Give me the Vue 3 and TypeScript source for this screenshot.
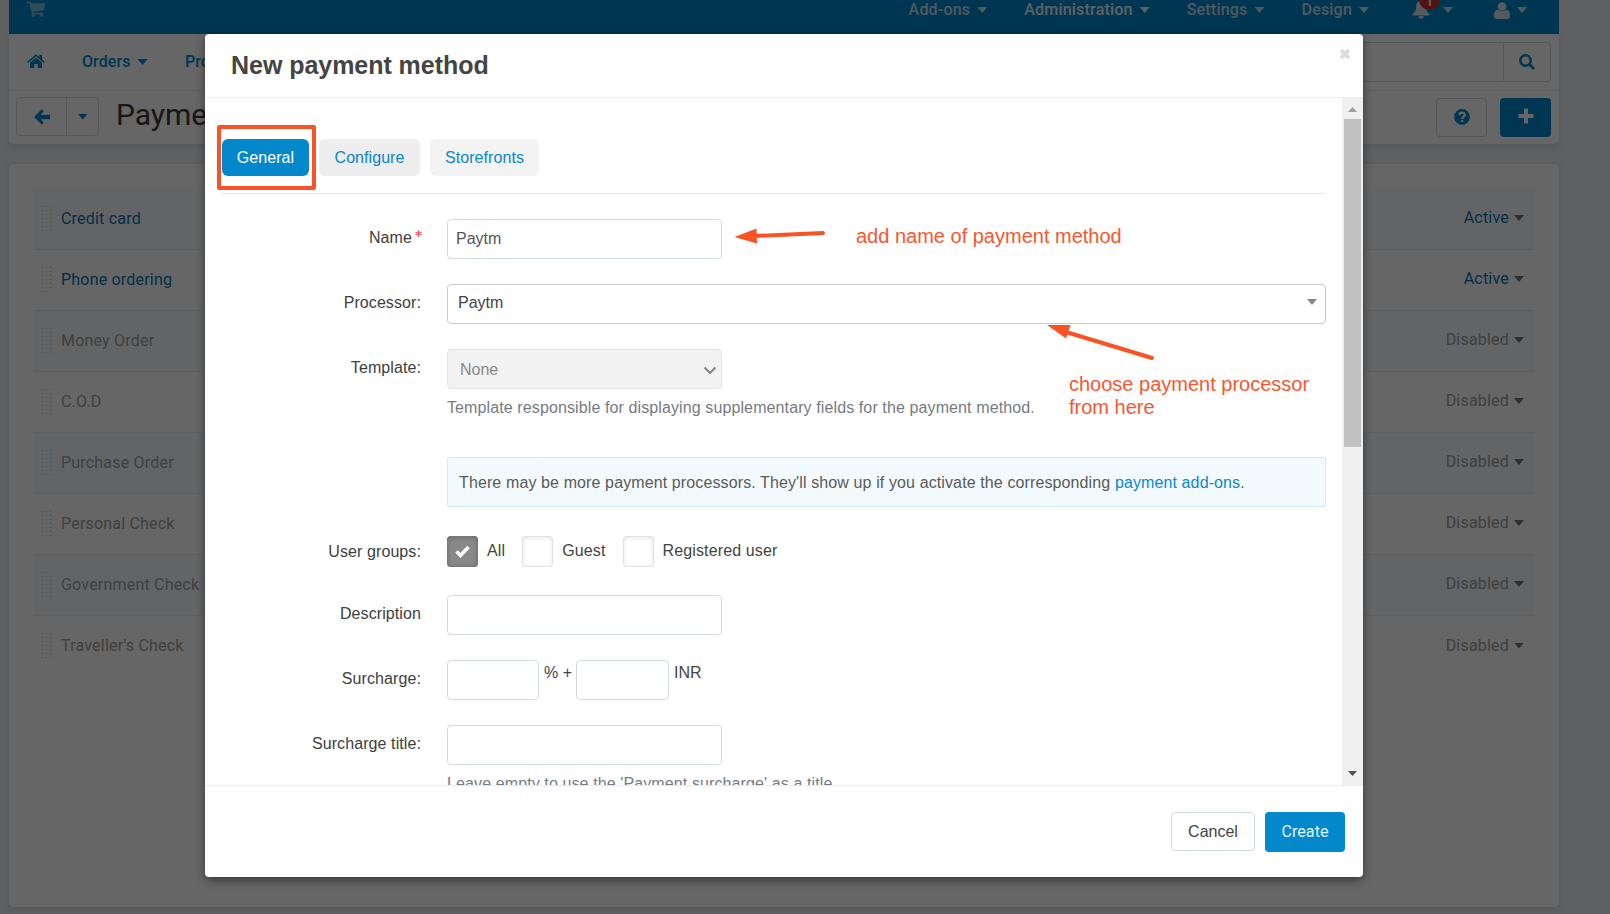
<script setup lang="ts">
import { ref } from 'vue'

interface MenuItem { label: string; active?: boolean; gap: number }
interface Method { name: string; enabled: boolean }
interface Group { label: string; checked: boolean }

const menu: MenuItem[] = [
  { label: 'Add-ons', gap: 37 },
  { label: 'Administration', active: true, gap: 37 },
  { label: 'Settings', gap: 37 },
  { label: 'Design', gap: 43 },
]

const methods: Method[] = [
  { name: 'Credit card', enabled: true },
  { name: 'Phone ordering', enabled: true },
  { name: 'Money Order', enabled: false },
  { name: 'C.O.D', enabled: false },
  { name: 'Purchase Order', enabled: false },
  { name: 'Personal Check', enabled: false },
  { name: 'Government Check', enabled: false },
  { name: "Traveller's Check", enabled: false },
]

const tabs = ['General', 'Configure', 'Storefronts']
const activeTab = ref('General')
const paymentName = ref('Paytm')
const groups = ref<Group[]>([
  { label: 'All', checked: true },
  { label: 'Guest', checked: false },
  { label: 'Registered user', checked: false },
])
</script>

<template>
  <div class="screen">
    <div class="page">
      <header class="topbar">
        <svg class="cart" width="18" height="16" viewBox="0 0 18 16">
          <path d="M0 .8h3.600l.5 1.500H18l-1 7.200-11 1.200.4 1H16v1.700H5L2.600 2.600H0z" />
          <circle cx="6.200" cy="14.200" r="1.600" /><circle cx="14.600" cy="14.200" r="1.600" />
        </svg>
        <nav class="menu">
          <a v-for="m in menu" :key="m.label" :class="{ on: m.active }" :style="{ marginRight: m.gap + 'px' }">
            {{ m.label }}<i class="caret"></i>
          </a>
          <span class="bell">
            <svg width="18" height="19" viewBox="0 0 18 19">
              <path d="M9 0c3.200 0 4.600 2.400 4.800 5.400.2 3.400 1 5.600 3.700 7.600v1.600H.5V13C3.200 11 4 8.800 4.200 5.400 4.400 2.400 5.800 0 9 0zM6.400 15h5.200a2.600 2.600 0 0 1-5.200 0z" />
            </svg>
            <b class="count">1</b>
          </span>
          <i class="caret bell-caret"></i>
          <svg class="user" width="16" height="17" viewBox="0 0 16 17">
            <circle cx="8" cy="4.500" r="4.300" />
            <path d="M4 7.500C1 8 0 10.500 0 14c0 2 1 3 3 3h10c2 0 3-1 3-3 0-3.500-1-6-4-6.500-2 2.300-6 2.300-8 0z" />
          </svg>
          <i class="caret"></i>
        </nav>
      </header>

      <section class="headcard">
        <div class="subnav">
          <svg class="home" width="18" height="14" viewBox="0 0 18 14">
            <path d="M9 .2 12.400 3V.800H15V5.200l2.700 2.300-1 1.200L9 2.300 1.300 8.700l-1-1.200z" />
            <path d="M9 3.600 15 8.600V14h-4.300v-4H7.300v4H3V8.600z" />
          </svg>
          <a class="orders">Orders<i class="caret"></i></a>
          <a class="products">Pro</a>
          <div class="search">
            <span></span>
            <svg width="16" height="16" viewBox="0 0 16 16">
              <circle cx="6.500" cy="6.500" r="5.200" /><path d="M10.500 10.500 15 15" />
            </svg>
          </div>
        </div>
        <div class="titlebar">
          <div class="back">
            <span><svg width="16" height="16" viewBox="0 0 16 16"><path d="M7.800.3 9.800 2.300 6.700 5.800H16v4.400H6.700l3.100 3.500-2 2L0 8z" /></svg></span>
            <span class="drop"><i class="caret"></i></span>
          </div>
          <h1>Payment methods</h1>
          <span class="help">
            <svg width="16" height="16" viewBox="0 0 16 16">
              <circle cx="8" cy="8" r="7.900" />
              <path class="cut" d="M5.500 6.200c0-3.400 5.200-3.200 5.200-.3 0 1.900-2.500 1.900-2.500 4" />
              <path class="cut" d="M8.200 11v2" />
            </svg>
          </span>
          <span class="plus"><svg width="16" height="16" viewBox="0 0 16 16"><path d="M6 .5h4V6h5.500v4H10v5.500H6V10H.5V6H6z" /></svg></span>
        </div>
      </section>

      <section class="listcard">
        <div v-for="m in methods" :key="m.name" class="row" :class="{ off: !m.enabled }">
          <i class="grip"></i>
          <span class="mname">{{ m.name }}</span>
          <span class="status">{{ m.enabled ? 'Active' : 'Disabled' }}<i class="caret"></i></span>
        </div>
      </section>
    </div>

    <div class="backdrop"></div>

    <div class="modal">
      <header class="mhead">
        <h2>New payment method</h2>
        <svg class="close" width="12" height="12" viewBox="0 0 12 12"><path d="M2 2 10 10M10 2 2 10" /></svg>
      </header>
      <div class="mbody">
        <div class="content">
          <div class="tabs">
            <button v-for="t in tabs" :key="t" :class="['tab', t.toLowerCase(), { on: t === activeTab }]" @click="activeTab = t">{{ t }}</button>
          </div>

          <div class="field">
            <label class="req">Name<svg width="7" height="7" viewBox="0 0 7 7"><path d="M3.500.3v6.400M.5 2l6 3M6.500 2l-6 3" /></svg></label>
            <input v-model="paymentName" class="box wide" spellcheck="false" />
          </div>
          <div class="field">
            <label>Processor:</label>
            <div class="box processor">Paytm<i></i></div>
          </div>
          <div class="field last">
            <label>Template:</label>
            <div class="box wide template">None
              <svg width="14" height="9" viewBox="0 0 14 9"><path d="M1.500 1.500 7 7l5.500-5.500" /></svg>
            </div>
          </div>
          <p class="hint">Template responsible for displaying supplementary fields for the payment method.</p>
          <p class="info">There may be more payment processors. They'll show up if you activate the corresponding <a>payment add-ons</a>.</p>

          <div class="field groups">
            <label>User groups:</label>
            <span v-for="g in groups" :key="g.label" class="group">
              <i class="check" :class="{ on: g.checked }">
                <svg v-if="g.checked" width="15" height="13" viewBox="0 0 15 13"><path d="M1.500 6.500 5.500 10.500 13.500 2" /></svg>
              </i>{{ g.label }}
            </span>
          </div>
          <div class="field"><label>Description</label><input class="box wide" /></div>
          <div class="field">
            <label>Surcharge:</label>
            <input class="box percent" /><span class="unit plusunit">% +</span>
            <input class="box amount" /><span class="unit">INR</span>
          </div>
          <div class="field last"><label>Surcharge title:</label><input class="box wide" /></div>
          <p class="hint">Leave empty to use the 'Payment surcharge' as a title.</p>
        </div>
        <div class="scroll">
          <i class="up"></i><i class="thumb"></i><i class="down"></i>
        </div>
      </div>
      <footer class="mfoot">
        <button class="cancel">Cancel</button>
        <button class="create">Create</button>
      </footer>
    </div>

    <i class="frame"></i>
    <svg class="arrows" width="1610" height="914" viewBox="0 0 1610 914">
      <path class="shaft" d="M755 236 823 233" />
      <path d="M734.500 237 756.500 228.500 757 243.500z" />
      <path class="shaft" d="M1066 332 1152 358" />
      <path d="M1047 325 1070.500 325 1066 338.500z" />
    </svg>
    <div class="note n1">add name of payment method</div>
    <div class="note n2">choose payment processor<br />from here</div>
  </div>
</template>

<style>
body { margin: 0; overflow: hidden; }
</style>

<style scoped>
* { box-sizing: border-box; }
.screen {
  position: relative; width: 1610px; height: 914px; overflow: hidden;
  background: #ebeff4; color: #333;
  font: 16px/20px "Liberation Sans", Arial, sans-serif;
}
.page { width: 1550px; margin-left: 9px; font-family: Roboto, sans-serif; }
.caret {
  display: inline-block; flex: none; width: 10px; height: 6px; background: currentColor;
  clip-path: polygon(0 0, 100% 0, 50% 100%);
}
.topbar { display: flex; height: 34px; background: #0388cc; color: #c3dfed; }
.cart { margin: 1px 0 0 18px; fill: #78bce0; }
.menu { display: flex; margin-left: auto; padding-right: 32px; height: 20px; align-items: center; font-weight: 500; }
.menu a { display: flex; align-items: center; gap: 7px; letter-spacing: .2px; }
.menu a.on { color: #e4f5fc; }
.bell { position: relative; display: flex; width: 18px; margin-right: 13px; }
.bell svg { fill: #d0e4ee; }
.count {
  position: absolute; left: 7px; top: -13px; width: 21px; height: 22px; border-radius: 11px;
  background: #c8302b; color: #fff; font: 500 14px/27px Roboto, sans-serif; text-align: center;
}
.bell-caret { margin-right: 41px; }
.user { fill: #d0e4ee; margin-right: 7px; }
.headcard, .listcard { background: #fff; box-shadow: 0 2px 6px rgba(40, 60, 80, .14); }
.headcard { height: 110px; border-radius: 0 0 5px 5px; margin-bottom: 20px; }
.subnav { display: flex; height: 57px; border-bottom: 1px solid #eceeef; align-items: center; color: #0388cc; font-weight: 500; }
.subnav a { display: flex; align-items: center; gap: 7px; height: 20px; letter-spacing: .1px; }
.home { margin: -3px 37px 0 18px; fill: #0388cc; }
.orders { width: 103px; }
.search { margin: 0 8px 0 auto; width: 400px; height: 40px; display: flex; align-items: center; border: 1px solid #d3dbe3; border-radius: 4px; }
.search span { flex: 1; align-self: stretch; border-right: 1px solid #d3dbe3; margin-right: 15px; }
.search svg { fill: none; stroke: #0388cc; stroke-width: 2.600; margin-right: 15px; }
.titlebar { display: flex; padding: 6px 8px 0 7px; }
.back { display: flex; width: 83px; height: 39px; border: 1px solid #d3dbe3; border-radius: 4px; }
.back span { display: flex; align-items: center; justify-content: center; width: 50px; color: #0388cc; }
.back svg { fill: #0388cc; }
.back .drop { width: 32px; border-left: 1px solid #d3dbe3; }
h1 { margin: 0 auto 0 17px; font: 400 30px/36px Roboto, sans-serif; color: #3a3a3a; }
.help, .plus { display: flex; align-items: center; justify-content: center; width: 51px; height: 39px; border-radius: 4px; margin-top: 1px; }
.help { border: 1px solid #d3dbe3; margin-right: 13px; fill: #0388cc; }
.help svg { margin-top: -2px; }
.cut { fill: none; stroke: #fff; stroke-width: 2.200; }
.plus { background: #0388cc; fill: #fff; }
.plus svg { margin-top: -3px; }
.listcard { height: 743px; padding: 25px; border-radius: 5px; }
.row { display: flex; align-items: center; height: 61px; border-bottom: 1px solid #eaeef1; padding: 0 10px 0 8px; color: #0673b5; }
.row:nth-child(odd) { background: #f8fbff; }
.row:last-child { border: 0; background: none; }
.grip {
  width: 10px; height: 25px; margin-right: 9px; margin-top: -2px;
  background: linear-gradient(#fff, #fff) 0 0 / 0 0 no-repeat, radial-gradient(circle at .5px .5px, #c4c8cb .7px, transparent .8px) 0 0 / 4px 4px;
}
.mname { margin-top: -1px; letter-spacing: .2px; }
.status { margin-left: auto; display: flex; align-items: center; gap: 5px; margin-top: -2px; letter-spacing: .2px; }
.status .caret { background: #777; }
.off { color: #a0a0a0; }

.backdrop { position: absolute; inset: 0; background: rgba(0, 0, 0, .6); }

.modal {
  position: absolute; left: 205px; top: 34px; width: 1158px; height: 843px;
  background: #fff; border-radius: 4px; box-shadow: 0 3px 10px rgba(0, 0, 0, .45);
}
.mhead { display: flex; justify-content: space-between; height: 64px; border-bottom: 1px solid #eee; padding: 0 12px 0 26px; }
h2 { margin: 15px 0 0; font: 700 25px/32px "Liberation Sans", Arial, sans-serif; color: #444; letter-spacing: -.04px; }
.close { margin-top: 14px; fill: none; stroke: #ddd; stroke-width: 4; }
.mbody { display: flex; height: 687px; overflow: hidden; }
.content { width: 1137px; padding: 0 16px 0 17px; }
.tabs { display: flex; align-items: flex-start; gap: 10px; height: 96px; padding-top: 41px; margin-bottom: 25px; border-bottom: 1px solid #e1e5ea; }
.tab { height: 37px; padding: 0; border: 0; border-radius: 6px; font: 16px/37px "Liberation Sans", Arial, sans-serif; background: #ededed; color: #0e86ca; letter-spacing: .06px; }
.general { width: 87px; }
.configure { width: 101px; }
.storefronts { width: 109px; background: #f3f3f3; }
.tab.on { background: #0388cc; color: #fff; }
.field { display: flex; height: 40px; margin-bottom: 25px; }
.field.last { margin-bottom: 0; }
label { width: 199px; margin-right: 26px; text-align: right; line-height: 38px; color: #404040; letter-spacing: .09px; }
.req svg { margin-left: 3px; vertical-align: 6px; stroke: #f55165; stroke-width: 1.300; margin-right: -1px; }
.box { height: 40px; border: 1px solid #d3dae2; border-radius: 4px; background: #fff; padding: 0 8px; font: 16px/37px "Liberation Sans", Arial, sans-serif; color: #555; outline: 0; }
.wide { width: 275px; }
.processor { display: flex; justify-content: space-between; width: 879px; padding: 0 8px 0 10px; border-color: #c8c8c8; line-height: 35px; color: #444; }
.processor i { width: 10px; height: 6px; margin-top: 14px; background: #888; clip-path: polygon(0 0, 100% 0, 50% 100%); }
.template { display: flex; justify-content: space-between; padding: 0 4px 0 12px; background: #f2f2f2; border-color: #e0e4e9; color: #888; line-height: 39px; }
.template svg { margin-top: 16px; fill: none; stroke: #888; stroke-width: 2.200; }
.hint { margin: 9px 0 0 225px; color: #757b83; line-height: 20px; white-space: nowrap; letter-spacing: .11px; }
.info { margin: 39px 0 29px 225px; height: 50px; padding: 0 11px; border: 1px solid #d0edfd; border-radius: 2px; background: #f3fafe; color: #5a5a5a; line-height: 49px; white-space: nowrap; letter-spacing: .115px; }
.info a { color: #0e86ca; }
.groups { height: 31px; margin-bottom: 28px; }
.groups label { line-height: 32px; }
.group { display: flex; line-height: 30px; color: #444; margin-right: 17px; letter-spacing: .13px; }
.check { display: flex; align-items: center; justify-content: center; width: 31px; height: 31px; margin-right: 9px; border: 1px solid #e2e2e2; border-radius: 3px; box-shadow: inset 0 1px 4px rgba(0, 0, 0, .1); }
.check.on { background: #888; border-color: #777; box-shadow: inset 0 1px 4px rgba(0, 0, 0, .2); }
.check svg { fill: none; stroke: #fff; stroke-width: 3.500; }
.percent { width: 92px; }
.amount { width: 93px; }
.unit { line-height: 25px; margin-left: 5px; color: #444; }
.plusunit { width: 32px; }
.scroll { width: 21px; background: #f0f0f0; display: flex; flex-direction: column; align-items: center; padding: 9px 0 9px; }
.up, .down { width: 9px; height: 5px; background: #a0a0a0; clip-path: polygon(50% 0, 100% 100%, 0 100%); }
.down { margin-top: auto; background: #505050; clip-path: polygon(0 0, 100% 0, 50% 100%); }
.thumb { width: 17px; height: 328px; margin-top: 7px; background: #c1c1c1; }
.mfoot { display: flex; justify-content: flex-end; gap: 10px; height: 92px; border-top: 1px solid #eaeaea; padding: 26px 18px 0 0; }
.mfoot button { padding: 0; border-radius: 4px; font: 16px/36px "Liberation Sans", Arial, sans-serif; }
.cancel { width: 84px; height: 39px; background: #fff; border: 1px solid #d3dae2; color: #444; }
.create { width: 80px; height: 40px; border: 0; background: #0388cc; color: #e2f2fb; }
.mfoot .create { font: 16px/38px Roboto, sans-serif; letter-spacing: .1px; }

.frame { position: absolute; left: 217px; top: 125px; width: 99px; height: 65px; border: 4px solid #f95228; border-radius: 2px; }
.arrows { position: absolute; left: 0; top: 0; fill: #f95224; pointer-events: none; }
.shaft { stroke: #f95224; stroke-width: 4; stroke-linecap: round; }
.note { position: absolute; font-size: 20px; line-height: 23px; color: #f95630; white-space: nowrap; }
.n1 { left: 856px; top: 225px; }
.n2 { left: 1069px; top: 373px; }
</style>
